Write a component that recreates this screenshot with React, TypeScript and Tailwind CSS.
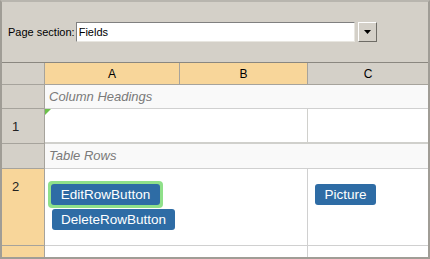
import React from "react";

const headCell = "bg-[#d4d0c8] border-r border-b border-[#a6a39c]";

function RowHead({ label, orange }: { label?: string; orange?: boolean }) {
  return (
    <div
      className={`w-[43px] shrink-0 border-r border-b border-[#a6a39c] pl-[10px] pt-[8px] text-[13px] text-[#222] ${
        orange ? "bg-[#f8d69a]" : "bg-[#d4d0c8]"
      }`}
    >
      {label}
    </div>
  );
}

function Btn({ children, w }: { children: React.ReactNode; w: string }) {
  return (
    <div className={`h-[21px] ${w} rounded-[3px] bg-[#2e6ca5] text-white text-[13.5px] leading-[21px] text-center`}>
      {children}
    </div>
  );
}

export default function App() {
  return (
    <div
      className="w-[430px] h-[259px] overflow-hidden bg-[#d4d0c8] border-2 border-t-[#b8b5ae] border-l-[#a09d96] border-r-[#a09d96] border-b-[#a09d96] flex flex-col"
      style={{ fontFamily: '"Liberation Sans", Arial, sans-serif' }}
    >
      {/* toolbar */}
      <div className="h-[60px] shrink-0 flex items-center pl-[6px] text-[11px] text-black">
        <span className="mr-[1px]">Page section:</span>
        <div className="w-[279px] h-[20px] bg-white border border-t-[#808080] border-l-[#808080] border-b-[#e8e6e0] border-r-[#e8e6e0] pl-[2px] leading-[18px]">
          Fields
        </div>
        <div className="ml-[3px] w-[19px] h-[20px] bg-[#d4d0c8] border border-t-white border-l-white border-r-[#6e6c66] border-b-[#6e6c66] flex items-center justify-center">
          <svg width="7" height="4" viewBox="0 0 7 4">
            <path d="M0 0h7L3.5 4z" fill="#000" />
          </svg>
        </div>
      </div>

      {/* grid */}
      <div className="flex-1 bg-white border-t border-[#8a8780] flex flex-col text-[12px]">
        {/* column letters */}
        <div className="h-[22px] flex shrink-0">
          <div className={`w-[43px] ${headCell}`} />
          <div className="w-[135px] bg-[#f8d69a] border-r border-b border-[#a6a39c] flex items-center justify-center">A</div>
          <div className="w-[128px] bg-[#f8d69a] border-r border-b border-[#a6a39c] flex items-center justify-center">B</div>
          <div className="flex-1 bg-[#d4d0c8] border-b border-[#a6a39c] flex items-center justify-center">C</div>
        </div>

        {/* column headings section */}
        <div className="h-[24px] flex shrink-0">
          <RowHead />
          <div className="flex-1 bg-[#f9f9f9] border-b border-[#d0d0d0] pl-[4px] flex items-center italic text-[13px] text-[#7a7a7a]">
            Column Headings
          </div>
        </div>

        {/* row 1 */}
        <div className="h-[35px] flex shrink-0">
          <RowHead label="1" />
          <div className="relative w-[135px] border-b-2 border-[#d0d0cc]">
            <svg className="absolute left-0 top-0" width="6" height="6" viewBox="0 0 6 6">
              <path d="M0 0h6L0 6z" fill="#6cc04a" />
            </svg>
          </div>
          <div className="w-[128px] border-r border-b-2 border-[#d0d0cc]" />
          <div className="flex-1 border-b-2 border-[#d0d0cc]" />
        </div>

        {/* table rows section */}
        <div className="h-[25px] flex shrink-0">
          <RowHead />
          <div className="flex-1 bg-[#f9f9f9] border-b border-[#d0d0d0] pl-[4px] flex items-center italic text-[13px] text-[#7a7a7a]">
            Table Rows
          </div>
        </div>

        {/* row 2 */}
        <div className="h-[77px] flex shrink-0">
          <RowHead label="2" orange />
          <div className="w-[135px] border-b border-[#d0d0d0] pl-[3px] pt-[12px] flex flex-col gap-[4px]">
            <div className="w-[115px] p-[3px] rounded-[4px] bg-[#8fe08a]">
              <Btn w="w-[109px]">EditRowButton</Btn>
            </div>
            <div className="ml-[4px] -mt-[3px]">
              <Btn w="w-[123px]">DeleteRowButton</Btn>
            </div>
          </div>
          <div className="w-[128px] border-r border-b border-[#d0d0d0]" />
          <div className="flex-1 border-b border-[#d0d0d0] pl-[7px] pt-[15px]">
            <Btn w="w-[61px]">Picture</Btn>
          </div>
        </div>

        {/* row 3 */}
        <div className="flex-1 flex">
          <RowHead label="3" orange />
          <div className="w-[135px]" />
          <div className="w-[128px] border-r border-[#d0d0d0]" />
          <div className="flex-1" />
        </div>
      </div>
    </div>
  );
}
